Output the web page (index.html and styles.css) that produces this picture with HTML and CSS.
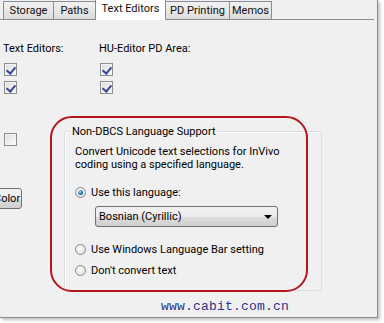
FILE: index.html
```html
<!DOCTYPE html>
<html>
<head>
<meta charset="utf-8">
<link rel="stylesheet" href="styles.css">
</head>
<body>
<div class="window">
  <div class="tabs">
    <div class="tab t-storage">Storage</div>
    <div class="tab t-paths">Paths</div>
    <div class="tab t-text active">Text Editors</div>
    <div class="tab t-pd">PD Printing</div>
    <div class="tab t-memos">Memos</div>
  </div>
  <div class="panel">
    <div class="top">
      <div class="col col-a">
        <div class="label">Text Editors:</div>
        <span class="cb checked"></span>
        <span class="cb checked"></span>
      </div>
      <div class="col col-b">
        <div class="label">HU-Editor PD Area:</div>
        <span class="cb checked"></span>
        <span class="cb checked"></span>
      </div>
    </div>
    <div class="bottom">
      <div class="side">
        <span class="cb"></span>
        <button class="btn">Color</button>
      </div>
      <div class="group">
        <div class="legend">Non-DBCS Language Support</div>
        <p class="desc">Convert Unicode text selections for InVivo<br>coding using a specified language.</p>
        <div class="opt opt1"><span class="radio on"></span>Use this language:</div>
        <div class="select"><span>Bosnian (Cyrillic)</span><span class="arrow"></span></div>
        <div class="opt opt2"><span class="radio"></span>Use Windows Language Bar setting</div>
        <div class="opt opt3"><span class="radio"></span>Don't convert text</div>
      </div>
    </div>
    <div class="mark">www.cabit.com.cn</div>
    <div class="annot"></div>
  </div>
</div>
</body>
</html>
```
FILE: styles.css
```css
* { box-sizing: border-box; }
html, body { margin: 0; padding: 0; background: #ffffff; }
body { width: 384px; height: 323px; overflow: hidden; font-family: Roboto, "Liberation Sans", Arial, sans-serif; font-size: 11px; color: #000; }
.window {
  width: 378px; height: 318px; background: #f0f0f0;
  border-right: 1px solid #8a8a8a; border-bottom: 1px solid #8a8a8a;
  box-shadow: 2px 2px 3px rgba(0,0,0,0.25);
  overflow: hidden; position: relative;
}
.tabs { display: flex; height: 20px; padding-left: 3px; align-items: flex-end; border-bottom: 1px solid #898c95; margin-right: 3px; }
.tab {
  height: 18px; padding: 0; line-height: 17px; text-align: center;
  border: 1px solid #898c95; border-bottom: none; border-left-width: 0;
  background: linear-gradient(#f2f2f2, #dcdcdc);
  color: #111;
}
.t-storage { width: 51px; border-left-width: 1px; }
.t-paths { width: 42px; }
.t-text { width: 71px; }
.t-pd { width: 64px; }
.t-memos { width: 42px; }
.tab.active { height: 21px; background: #fff; margin-bottom: -1px; line-height: 18px; border-left-width: 1px; margin-left: -1px; }
.panel { position: relative; height: 297px; }
.top { display: flex; padding-top: 22px; }
.col { display: flex; flex-direction: column; align-items: flex-start; }
.col-a { width: 99px; padding-left: 3px; }
.label { height: 14px; line-height: 14px; margin-bottom: 7px; }
.cb {
  display: block; width: 13px; height: 13px; border: 1px solid #8e8f8f;
  background: linear-gradient(135deg, #dcdcdc, #fdfdfd);
  box-shadow: inset 0 0 0 1px #f4f4f4; margin-left: 1px; margin-bottom: 5px; position: relative;
}
.cb.checked::after {
  content: ""; position: absolute; left: 3px; top: 1px; width: 4px; height: 7px;
  border-right: 2px solid #3b4a9a; border-bottom: 2px solid #3b4a9a; transform: rotate(40deg);
}
.bottom { display: flex; margin-top: 32px; }
.side { width: 64px; display: flex; flex-direction: column; align-items: flex-start; padding-top: 2px; padding-left: 3px; }
.btn {
  margin-top: 37px; margin-left: -10px; height: 21px; width: 29px; padding: 0 2px 0 0; text-align: right;
  border: 1px solid #707070; border-radius: 3px;
  background: linear-gradient(#f2f2f2 0%, #ebebeb 50%, #dddddd 51%, #cfcfcf 100%);
  font: 11px Roboto, "Liberation Sans", Arial, sans-serif; color: #000;
}
.group {
  width: 258px; height: 160px; border: 1px solid #d5dfe5; border-radius: 3px;
  box-shadow: inset 1px 1px 0 #fff; position: relative; padding: 13px 0 0 10px;
}
.legend { position: absolute; top: -7px; left: 6px; padding: 0 1px; background: #f0f0f0; line-height: 14px; }
.desc { margin: 0; line-height: 13px; }
.opt { display: flex; align-items: center; height: 16px; margin-left: 0; }
.opt1 { margin-top: 13px; }
.opt2 { margin-top: 14px; }
.opt3 { margin-top: 5px; }
.radio {
  width: 11px; height: 11px; border-radius: 50%; border: 1px solid #8a8a8a;
  background: radial-gradient(circle at 40% 40%, #ffffff, #d6d6d6);
  margin-right: 5px; position: relative; flex: none;
}
.radio.on::after {
  content: ""; position: absolute; left: 2px; top: 2px; width: 5px; height: 5px; border-radius: 50%;
  background: radial-gradient(circle at 35% 35%, #9fd2f5, #1b5f9c 70%, #0d3d6e);
}
.select {
  margin: 6px 0 0 20px; width: 183px; height: 21px; border: 1px solid #707070; border-radius: 3px;
  background: linear-gradient(#f2f2f2 0%, #ebebeb 50%, #dddddd 51%, #cfcfcf 100%);
  display: flex; align-items: center; justify-content: space-between; padding: 0 5px 0 3px;
}
.arrow { width: 0; height: 0; border-left: 4px solid transparent; border-right: 4px solid transparent; border-top: 4px solid #000; }
.mark {
  position: absolute; left: 161px; top: 279px;
  font-family: "Liberation Mono", "DejaVu Sans Mono", monospace; font-size: 13px; color: #28348a; letter-spacing: 0.2px;
}
.annot {
  position: absolute; left: 50px; top: 96px; width: 258px; height: 176px;
  border: 2px solid #b3151c; border-radius: 22px;
}
```
